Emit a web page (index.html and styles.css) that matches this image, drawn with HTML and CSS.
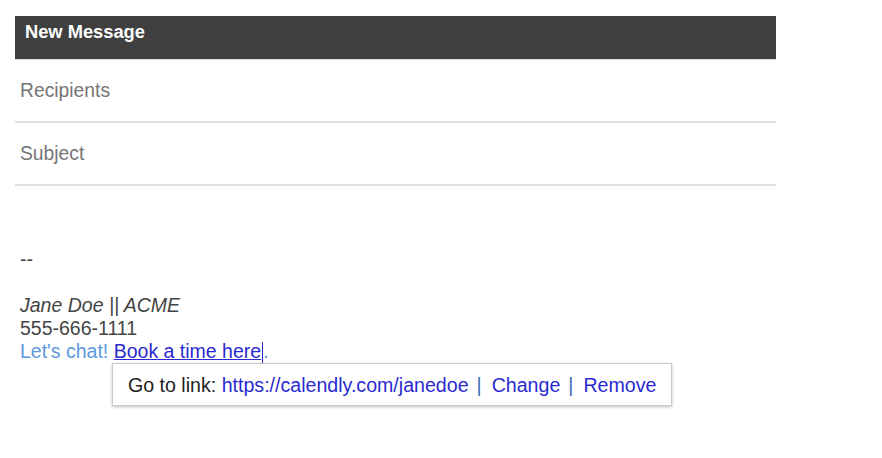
FILE: index.html
```
<!DOCTYPE html>
<html lang="en">

<head>
    <meta charset="UTF-8">
    <meta name="viewport" content="width=device-width, initial-scale=1.0">
    <title>New Message</title>
    <link rel="stylesheet" href="styles.css">
</head>

<body>
    <div class="compose">
        <div class="compose_head">New Message</div>
        <div class="field">Recipients</div>
        <div class="field">Subject</div>
        <div class="compose_body">
            <p>--</p>
            <p>&nbsp;</p>
            <p class="sig_name">Jane Doe || ACME</p>
            <p>555-666-1111</p>
            <p class="chat">Let's chat! <a href="#" class="book">Book a time here</a><span class="caret"></span>.</p>

            <div class="link_popup">Go to link: <a href="#">https://calendly.com/janedoe</a><span class="sep">|</span><a href="#">Change</a><span class="sep">|</span><a href="#">Remove</a></div>
        </div>
    </div>
</body>

</html>
```
FILE: styles.css
```
* {
    box-sizing: border-box;
    margin: 0;
    padding: 0;
    font-family: "Liberation Sans", Arial, Helvetica, sans-serif;
}

body {
    background-color: #fff;
    padding: 16px 0 0 15px;
}

.compose {
    width: 761px;
}

.compose_head {
    height: 44px;
    background-color: #404040;
    color: #fff;
    font-weight: bold;
    font-size: 18.3px;
    padding: 5px 0 0 10px;
    border-bottom: 1px solid #dadada;
}

.field {
    height: 63px;
    display: flex;
    align-items: center;
    padding-left: 5px;
    padding-top: 0;
    font-size: 19.3px;
    color: #757575;
    border-bottom: 2px solid #e0e0e0;
}

.compose_body {
    position: relative;
    padding: 62px 0 0 5px;
    height: 270px;
    font-size: 19.5px;
    line-height: 23px;
    color: #444;
}

.sig_name {
    font-style: italic;
}

.chat {
    color: #5a9ae0;
}

.book {
    color: #2a2ad0;
}

.caret {
    display: inline-block;
    width: 1px;
    height: 21px;
    margin-left: 1px;
    vertical-align: -5px;
    background-color: #2a2ad0;
}

.link_popup {
    position: absolute;
    left: 97px;
    top: 177px;
    width: 560px;
    height: 43px;
    padding-left: 15px;
    font-size: 19.6px;
    line-height: 43px;
    color: #222;
    background-color: #fff;
    border: 1px solid #c8c8c8;
    box-shadow: 0 1px 3px rgba(0, 0, 0, 0.25);
    white-space: nowrap;
}

.link_popup a {
    color: #2a2ad0;
    text-decoration: none;
}

.sep {
    color: #3a6ab0;
    margin: 0 10px 0 8px;
}
```
